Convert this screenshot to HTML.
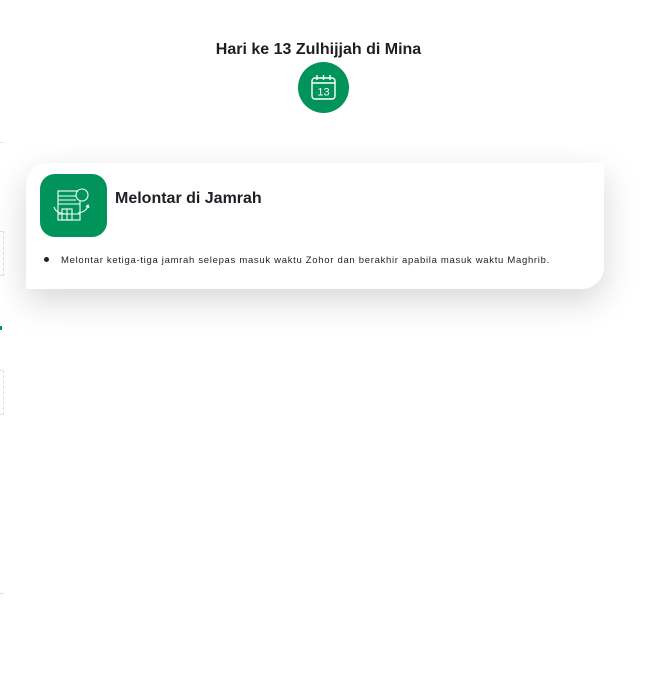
<!DOCTYPE html>
<html><head><meta charset="utf-8"><style>
*{margin:0;padding:0;box-sizing:border-box}
body{width:659px;height:682px;background:#fff;font-family:"Liberation Sans","DejaVu Sans",sans-serif;color:#1e1e24;position:relative;overflow:hidden}
h1{position:absolute;left:0;width:637px;top:41px;text-align:center;font-size:16px;font-weight:bold}
.cal{position:absolute;left:298px;top:62px;width:51px;height:51px;border-radius:50%;background:#00945a}
.card{position:absolute;left:26px;top:163px;width:578px;height:126px;background:#fff;border-radius:22px 0 22px 0;box-shadow:0 12px 34px rgba(0,0,0,.16)}
.ico{position:absolute;left:14px;top:11px;width:67px;height:63px;border-radius:15px;background:#00945a}
.t{position:absolute;left:89px;top:27px;font-size:16px;font-weight:bold}
.li{position:absolute;left:35px;top:92px;font-size:9.5px;color:#222;letter-spacing:.7px;white-space:nowrap}
.dot{position:absolute;left:18px;top:94px;width:5px;height:5px;border-radius:50%;background:#222}
.d{position:absolute;left:0;width:4px;border-right:1px dashed #ddd;border-top:1px solid #e4e4e4;border-bottom:1px solid #e4e4e4}
</style></head><body>
<h1>Hari ke 13 Zulhijjah di Mina</h1>
<div class="cal"><svg width="51" height="51" viewBox="0 0 51 51" fill="none" stroke="#fff" stroke-width="1.4">
<rect x="14" y="16" width="23" height="21" rx="3"/><line x1="14" y1="21" x2="37" y2="21"/>
<line x1="19" y1="13" x2="19" y2="18"/><line x1="25.5" y1="13" x2="25.5" y2="18"/><line x1="32" y1="13" x2="32" y2="18"/>
<text x="25.5" y="33.5" text-anchor="middle" fill="#fff" stroke="none" font-size="11" font-family="Liberation Sans">13</text></svg></div>
<div class="d" style="top:142px;height:1px;border:none;border-top:1px solid #e8e8e8"></div>
<div class="d" style="top:231px;height:45px"></div>
<div style="position:absolute;left:0;top:326px;width:2px;height:4px;background:#00945a"></div>
<div class="d" style="top:370px;height:45px"></div>
<div style="position:absolute;left:0;top:593px;width:4px;border-top:1px solid #e4e4e4"></div>
<div class="card">
<div class="ico"><svg width="67" height="63" viewBox="0 0 67 63" fill="none" stroke="#fff" stroke-width="1.1">
<rect x="18" y="17" width="22" height="29"/><line x1="18" y1="22" x2="36" y2="22"/><line x1="18" y1="26" x2="36" y2="26"/><line x1="18" y1="30" x2="40" y2="30"/>
<circle cx="42" cy="21" r="6" fill="#00945a"/>
<rect x="22" y="35" width="10" height="11"/><line x1="27" y1="35" x2="27" y2="46"/><line x1="18" y1="40" x2="40" y2="40"/>
<path d="M14 33 Q16 40 28 40"/><path d="M38 39 Q46 38 48 32"/><path d="M46 33 L48 31 L49 34"/>
</svg></div>
<div class="t">Melontar di Jamrah</div>
<div class="dot"></div>
<div class="li">Melontar ketiga-tiga jamrah selepas masuk waktu Zohor dan berakhir apabila masuk waktu Maghrib.</div>
</div>
</body></html>
